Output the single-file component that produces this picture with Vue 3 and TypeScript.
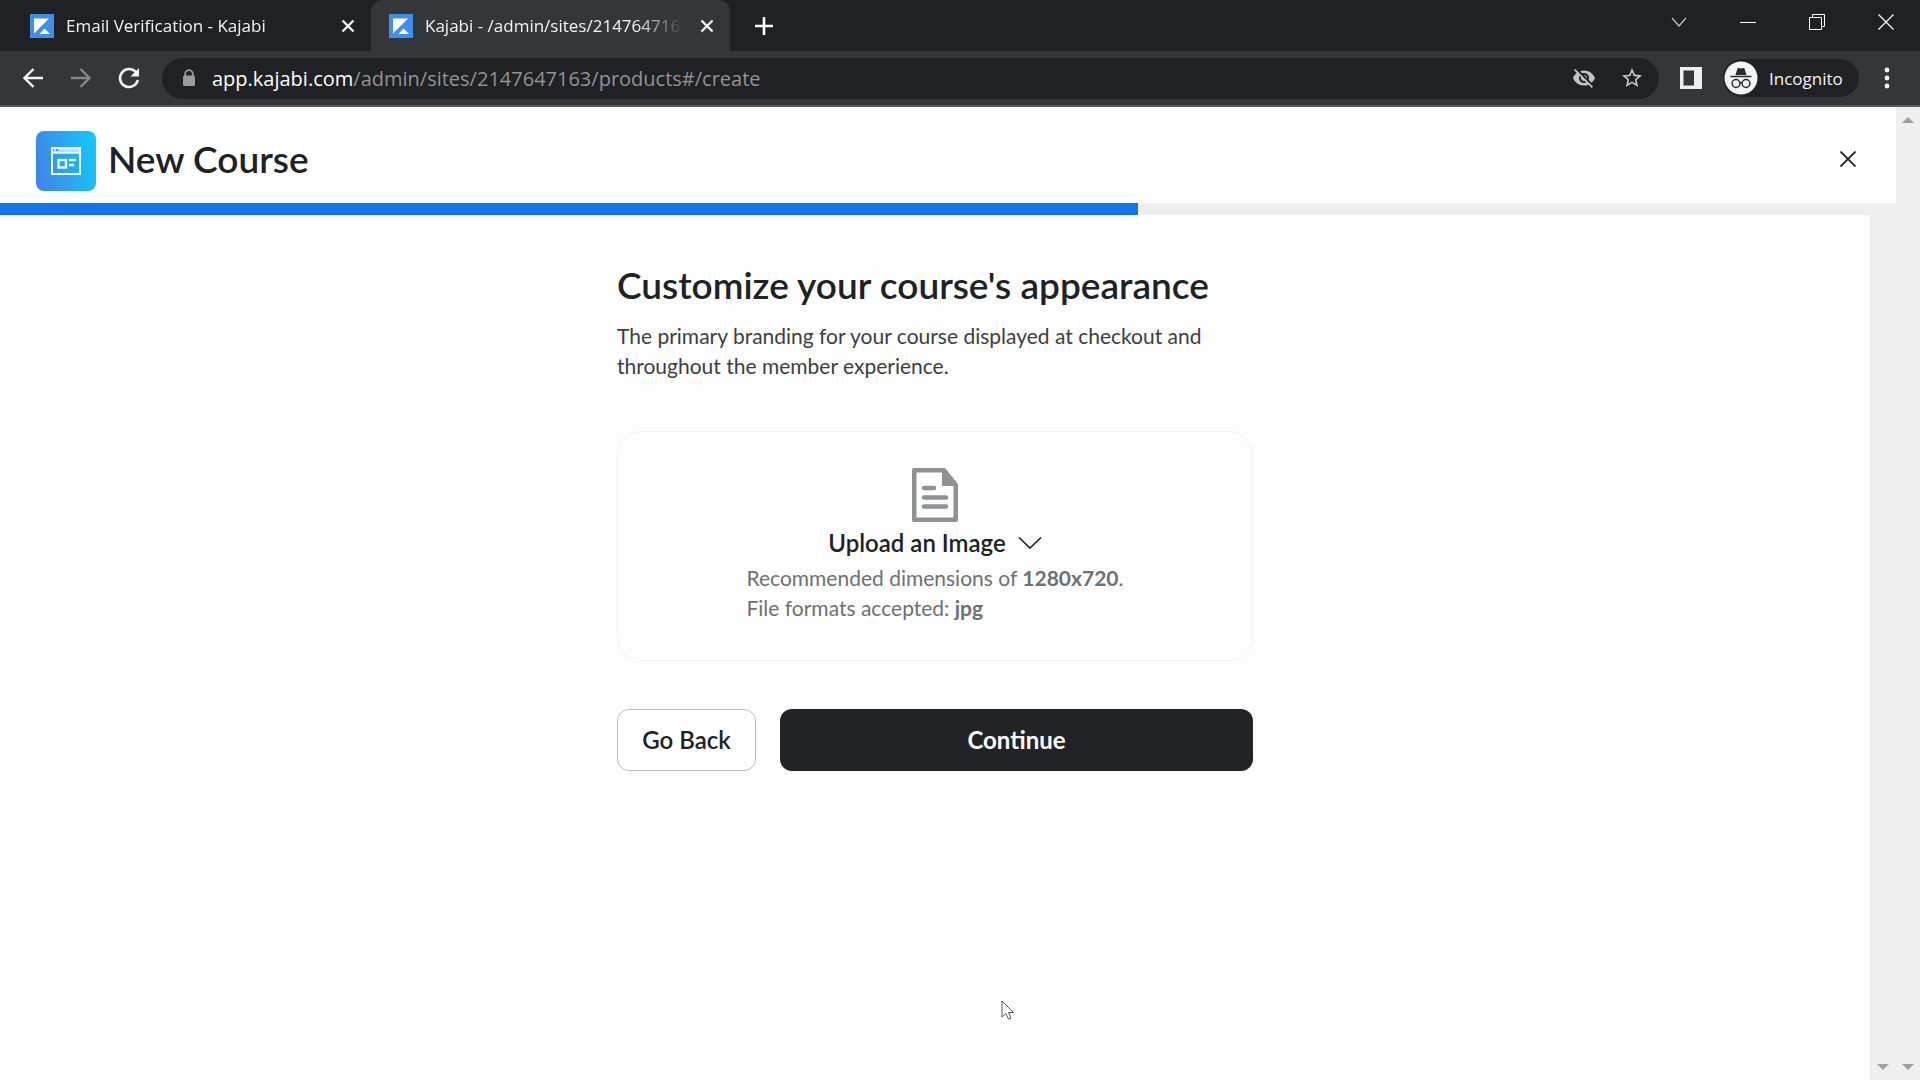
<script setup lang="ts">
interface Tab {
  title: string
  active: boolean
}

const tabs: Tab[] = [
  { title: 'Email Verification - Kajabi', active: false },
  { title: 'Kajabi - /admin/sites/2147647163', active: true },
]

const progress = 60
</script>

<template>
  <div class="browser">
    <div class="tab-strip">
      <div v-for="tab in tabs" :key="tab.title" class="tab" :class="{ active: tab.active }">
        <svg class="favicon" viewBox="0 0 24 24" aria-hidden="true">
          <rect width="24" height="24" fill="#3f8fe8" />
          <path d="M4 4.500H19L4 19.500Z M9.500 20L14.500 14.500L20 20Z" fill="#fff" />
        </svg>
        <span class="tab-title">{{ tab.title }}</span>
        <button class="tab-close" type="button" aria-label="Close tab">
          <svg width="14" height="14" viewBox="0 0 14 14"><path d="M1.500 1.500L12.500 12.500M12.500 1.500L1.500 12.500" stroke="#f1f3f4" stroke-width="2.400" /></svg>
        </button>
      </div>
      <button class="new-tab" type="button" aria-label="New tab">
        <svg width="18" height="18" viewBox="0 0 18 18"><path d="M9 0V18M0 9H18" stroke="#fff" stroke-width="2.600" /></svg>
      </button>
      <div class="window-controls">
        <button type="button" aria-label="Search tabs">
          <svg width="16" height="16" viewBox="0 0 16 16"><path d="M1 4L8 12L15 4" fill="none" stroke="#c4c5c7" stroke-width="1.200" /></svg>
        </button>
        <button type="button" aria-label="Minimize">
          <svg width="16" height="16" viewBox="0 0 16 16"><path d="M0 8.500H16" stroke="#fff" /></svg>
        </button>
        <button type="button" aria-label="Restore">
          <svg width="16" height="16" viewBox="0 0 16 16"><path d="M.5 3.500H12.500V15.500H.5Z M3.500 3.500V.5H15.500V12.500H12.500" fill="none" stroke="#fff" /></svg>
        </button>
        <button type="button" aria-label="Close window">
          <svg width="16" height="16" viewBox="0 0 16 16"><path d="M.5 .5L15.500 15.500M15.500 .5L.5 15.500" stroke="#fff" stroke-width="1.200" /></svg>
        </button>
      </div>
    </div>

    <div class="toolbar">
      <button class="nav" type="button" aria-label="Back">
        <svg width="20" height="20" viewBox="0 0 20 20"><path d="M20 10H2M10.500 1L1.500 10L10.500 19" fill="none" stroke="#f1f3f4" stroke-width="2.400" /></svg>
      </button>
      <button class="nav" type="button" aria-label="Forward">
        <svg width="20" height="20" viewBox="0 0 20 20"><path d="M0 10H18M9.500 1L18.500 10L9.500 19" fill="none" stroke="#86878a" stroke-width="2.400" /></svg>
      </button>
      <button class="nav" type="button" aria-label="Reload">
        <svg width="22" height="22" viewBox="0 0 22 22"><path d="M18.500 6A9 9 0 1 0 19.800 13" fill="none" stroke="#f1f3f4" stroke-width="2.600" /><path d="M21 1V9.500H12.500Z" fill="#f1f3f4" /></svg>
      </button>
      <div class="omnibox">
        <svg class="lock" width="14" height="18" viewBox="0 0 14 18"><path d="M3.200 8V5A3.800 3.800 0 0 1 10.800 5V8" fill="none" stroke="#9a9b9e" stroke-width="1.800" /><rect x="1" y="6.500" width="12" height="10.500" rx="1.500" fill="#9a9b9e" /></svg>
        <span class="url"><b>app.kajabi.com</b>/admin/sites/2147647163/products#/create</span>
        <button type="button" aria-label="Third-party cookies blocked">
          <svg width="24" height="24" viewBox="0 0 24 24" fill="#c2c3c6"><path d="M12 7c2.760 0 5 2.240 5 5 0 .650-.130 1.260-.360 1.830l2.920 2.920c1.510-1.260 2.700-2.890 3.430-4.750-1.730-4.390-6-7.500-11-7.500-1.400 0-2.740.250-3.980.700l2.160 2.160C10.740 7.130 11.350 7 12 7zM2 4.270l2.280 2.280.460.460C3.080 8.300 1.780 10.020 1 12c1.730 4.390 6 7.500 11 7.500 1.550 0 3.030-.300 4.380-.840l.420.420L19.730 22 21 20.730 3.270 3 2 4.270zM7.530 9.800l1.550 1.550c-.050.210-.080.430-.080.650 0 1.660 1.340 3 3 3 .220 0 .440-.030.650-.080l1.550 1.550c-.670.330-1.410.530-2.200.530-2.760 0-5-2.240-5-5 0-.790.200-1.530.530-2.200zm4.310-.780l3.150 3.150.020-.160c0-1.660-1.340-3-3-3l-.170.010z" /></svg>
        </button>
        <button type="button" aria-label="Bookmark this tab">
          <svg width="24" height="24" viewBox="0 0 24 24" fill="#c8c9cc"><path d="M22 9.240l-7.190-.620L12 2 9.190 8.630 2 9.240l5.460 4.730L5.820 21 12 17.270 18.180 21l-1.630-7.030L22 9.240zM12 15.400l-3.760 2.270 1-4.280-3.320-2.880 4.380-.380L12 6.100l1.710 4.040 4.380.380-3.320 2.880 1 4.280L12 15.400z" /></svg>
        </button>
      </div>
      <button class="side-panel" type="button" aria-label="Side panel">
        <svg width="22" height="22" viewBox="0 0 22 22"><path d="M0 0H22V22H0Z M3.500 3.500V18.500H14V3.500Z" fill="#eceef0" fill-rule="evenodd" /></svg>
      </button>
      <button class="incognito" type="button">
        <svg width="34" height="34" viewBox="0 0 34 34">
          <circle cx="17" cy="17" r="16.500" fill="#f1f3f4" />
          <path d="M11.500 14L13.500 7.600Q13.800 6.800 14.600 7L17 7.600L19.400 7Q20.200 6.800 20.500 7.600L22.500 14Z" fill="#2b2c2f" />
          <path d="M6.500 15.500H27.500" stroke="#2b2c2f" stroke-width="1.500" />
          <g fill="none" stroke="#2b2c2f" stroke-width="1.500"><circle cx="12" cy="22.500" r="3.900" /><circle cx="22" cy="22.500" r="3.900" /><path d="M15.800 22Q17 21.200 18.200 22" /></g>
        </svg>
        <span>Incognito</span>
      </button>
      <button class="menu" type="button" aria-label="Menu">
        <svg width="6" height="22" viewBox="0 0 6 22" fill="#f1f3f4"><circle cx="3" cy="3" r="2.400" /><circle cx="3" cy="11" r="2.400" /><circle cx="3" cy="19" r="2.400" /></svg>
      </button>
    </div>

    <div class="viewport">
      <div class="app">
        <header class="app-header">
          <svg class="course-icon" width="60" height="60" viewBox="0 0 60 60" aria-hidden="true">
            <defs>
              <linearGradient id="course-fill" x1="0" y1="0.600" x2="1" y2="0.400">
                <stop offset="0" stop-color="#4285e6" />
                <stop offset="1" stop-color="#15c5fb" />
              </linearGradient>
            </defs>
            <rect width="60" height="60" rx="8" fill="url(#course-fill)" />
            <g fill="none" stroke="#eafaff" stroke-width="2">
              <rect x="16" y="17" width="28" height="26" />
              <path d="M16 21.500H44" stroke-width="2.400" />
              <path d="M18 19H20M22 19H43" stroke-width="1.600" />
              <rect x="22.500" y="29" width="7.500" height="7.500" stroke-width="2.400" />
              <path d="M33 29H40M33 34H38" stroke-width="2.400" />
            </g>
          </svg>
          <h1>New Course</h1>
          <button class="dismiss" type="button" aria-label="Close">
            <svg width="16" height="16" viewBox="0 0 16 16"><path d="M.5 .5L15.500 15.500M15.500 .5L.5 15.500" stroke="#1c1d1f" stroke-width="1.800" /></svg>
          </button>
        </header>
        <div class="progress" role="progressbar" :aria-valuenow="progress">
          <div class="progress-fill" :style="{ width: progress + '%' }"></div>
        </div>
        <div class="body">
          <main>
            <h2>Customize your course's appearance</h2>
            <p class="lead">The primary branding for your course displayed at checkout and throughout the member experience.</p>
            <section class="upload-card">
              <svg class="file-icon" width="48" height="56" viewBox="0 0 48 56" aria-hidden="true">
                <path d="M3 1H34L47 17V53Q47 55 45 55H3Q1 55 1 53V3Q1 1 3 1ZM5.500 5.500V50.500H42.500V19H31V5.500Z" fill="#8f9193" fill-rule="evenodd" />
                <path d="M13 21H23M13 30.500H35M13 39.500H35" stroke="#8f9193" stroke-width="4.500" stroke-linecap="round" />
              </svg>
              <button class="upload" type="button">
                Upload an Image
                <svg width="24" height="12" viewBox="0 0 24 12"><path d="M1 .5L12 11L23 .5" fill="none" stroke="#1d1e20" stroke-width="1.600" /></svg>
              </button>
              <p class="hint">Recommended dimensions of <strong>1280x720</strong>.<br />File formats accepted: <strong>jpg</strong></p>
            </section>
            <div class="actions">
              <button class="back" type="button">Go Back</button>
              <button class="continue" type="button">Continue</button>
            </div>
          </main>
          <div class="scrollbar"><i class="down"></i></div>
        </div>
      </div>
      <div class="scrollbar outer"><i class="up"></i><i class="down"></i></div>
    </div>

    <svg class="cursor" width="14" height="20" viewBox="0 0 14 20" aria-hidden="true"><path d="M1 1V17L4.800 13.500L7.500 19L10 18L7.500 12.500H12.500Z" fill="#fff" stroke="#55565a" /></svg>
  </div>
</template>

<style>
body {
  margin: 0;
}
</style>

<style scoped>
* {
  box-sizing: border-box;
}

button {
  display: flex;
  align-items: center;
  justify-content: center;
  padding: 0;
  border: 0;
  background: none;
  color: inherit;
  font: inherit;
  cursor: pointer;
}

svg {
  flex: none;
}

.browser {
  position: relative;
  display: flex;
  flex-direction: column;
  min-height: 100vh;
  background: #fdfdfd;
  font-family: "Open Sans", "Noto Sans", sans-serif;
  color: #f1f3f4;
}

.tab-strip {
  display: flex;
  height: 51px;
  background: #202124;
}

.tab {
  display: flex;
  align-items: center;
  width: 359px;
  padding: 0 6px 0 18px;
  border-radius: 12px 12px 0 0;
  font-size: 17px;
}

.tab:first-child {
  width: 371px;
  padding-left: 30px;
}

.tab.active {
  background: #35363a;
}

.favicon {
  width: 24px;
  height: 24px;
}

.tab-title {
  flex: 1;
  margin: 0 6px 0 12px;
  overflow: hidden;
  white-space: nowrap;
  mask-image: linear-gradient(to right, #000 calc(100% - 48px), transparent);
}

.tab-close {
  width: 34px;
  height: 34px;
}

.new-tab {
  width: 68px;
}

.window-controls {
  display: flex;
  margin-left: auto;
}

.window-controls button {
  width: 69px;
  height: 43px;
}

.toolbar {
  display: flex;
  align-items: center;
  height: 56px;
  padding: 0 20px 0 9px;
  border-bottom: 2px solid #58595d;
  background: #35363a;
}

.nav {
  width: 48px;
  height: 48px;
}

.omnibox {
  display: flex;
  flex: 1;
  align-items: center;
  gap: 24px;
  height: 41px;
  margin-left: 9px;
  padding: 0 15px 0 20px;
  border-radius: 21px;
  background: #202124;
}

.lock {
  margin-right: -8px;
}

.url {
  flex: 1;
  color: #919396;
  font-size: 20px;
}

.url b {
  color: #fff;
  font-weight: 400;
}

.side-panel {
  width: 64px;
}

.incognito {
  justify-content: flex-start;
  gap: 11px;
  width: 136px;
  height: 38px;
  padding-left: 1px;
  border-radius: 19px;
  background: #202124;
  font-size: 17px;
}

.menu {
  width: 26px;
  margin-left: 15px;
}

.viewport {
  display: flex;
  flex: 1;
  color: #202124;
  font-family: Lato, sans-serif;
}

.app {
  display: flex;
  flex: 1;
  flex-direction: column;
}

.app-header {
  display: flex;
  align-items: center;
  height: 96px;
  padding: 8px 36px 0;
  background: #fff;
}

.course-icon {
  margin-top: 4px;
}

h1,
h2 {
  margin: 0;
  font-size: 37px;
  font-weight: 600;
  line-height: 44px;
}

h1 {
  flex: 1;
  margin-left: 12px;
}

.dismiss {
  width: 24px;
  height: 24px;
}

.progress {
  height: 12px;
  background: #efefef;
}

.progress-fill {
  height: 100%;
  background: #1277e6;
}

.body {
  display: flex;
  flex: 1;
}

main {
  width: 636px;
  margin: 0 auto;
  padding: 48px 0;
}

p {
  margin: 0;
  font-size: 21px;
  line-height: 30px;
}

.lead {
  margin-top: 14px;
  color: #3d3e41;
}

.upload-card {
  display: flex;
  flex-direction: column;
  align-items: center;
  height: 230px;
  margin-top: 50px;
  padding-top: 35px;
  border: 1px solid #f2f2f3;
  border-radius: 24px;
}

.upload {
  gap: 12px;
  margin-top: 4px;
  font-size: 24px;
  font-weight: 600;
  line-height: 32px;
}

.hint {
  margin-top: 4px;
  color: #6f7073;
}

.actions {
  display: flex;
  gap: 24px;
  margin-top: 48px;
}

.actions button {
  height: 62px;
  padding-bottom: 2px;
  border-radius: 12px;
  font-size: 24px;
  font-weight: 600;
}

.actions .back {
  width: 139px;
  border: 1px solid #bcbdc0;
  background: #fff;
}

.actions .continue {
  flex: 1;
  background: #222327;
  color: #fff;
  font-weight: 700;
}

.scrollbar {
  display: flex;
  flex-direction: column;
  align-items: center;
  width: 26px;
  padding: 10px 0;
  background: #efefef;
}

.outer {
  width: 24px;
}

.up,
.down {
  border: 6px solid transparent;
}

.up {
  border-top: 0;
  border-bottom-color: #a0a0a0;
}

.down {
  margin-top: auto;
  border-top-color: #a0a0a0;
  border-bottom: 0;
}

.cursor {
  position: absolute;
  top: 1000px;
  left: 1001px;
}
</style>
